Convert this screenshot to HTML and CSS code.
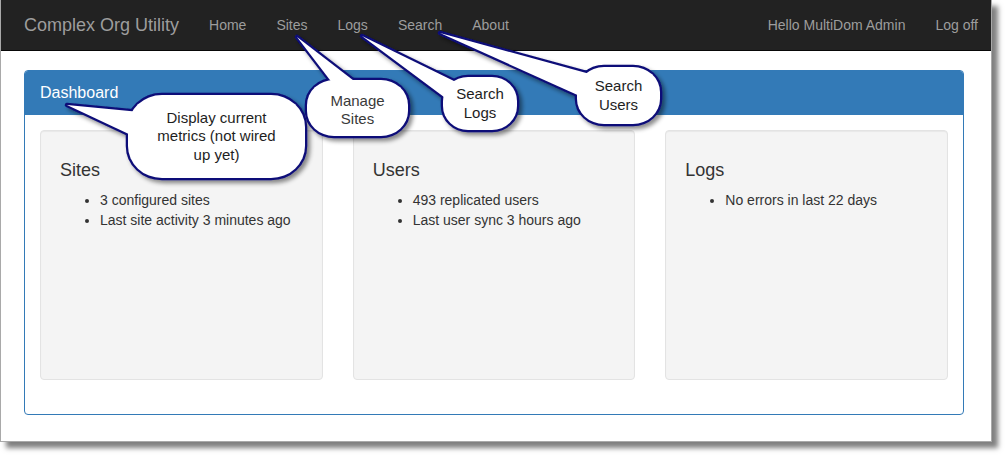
FILE: index.html
```html
<!DOCTYPE html>
<html lang="en">
<head>
<meta charset="utf-8">
<title>Complex Org Utility</title>
<link rel="stylesheet" href="styles.css">
</head>
<body>
<div class="frame">
  <nav class="navbar">
    <a class="brand" href="#">Complex Org Utility</a>
    <ul class="nav">
      <li><a href="#">Home</a></li>
      <li><a href="#">Sites</a></li>
      <li><a href="#">Logs</a></li>
      <li><a href="#">Search</a></li>
      <li><a href="#">About</a></li>
    </ul>
    <ul class="nav nav-right">
      <li><a href="#">Hello MultiDom Admin</a></li>
      <li><a href="#">Log off</a></li>
    </ul>
  </nav>
  <main class="content">
    <section class="panel">
      <div class="panel-heading">Dashboard</div>
      <div class="panel-body">
        <div class="well">
          <h4>Sites</h4>
          <ul>
            <li>3 configured sites</li>
            <li>Last site activity 3 minutes ago</li>
          </ul>
        </div>
        <div class="well">
          <h4>Users</h4>
          <ul>
            <li>493 replicated users</li>
            <li>Last user sync 3 hours ago</li>
          </ul>
        </div>
        <div class="well">
          <h4>Logs</h4>
          <ul>
            <li>No errors in last 22 days</li>
          </ul>
        </div>
      </div>
    </section>
  </main>
</div>

<svg class="callouts" width="1006" height="457" viewBox="0 0 1006 457">
  <defs>
    <filter id="sh" x="-20%" y="-20%" width="140%" height="140%">
      <feDropShadow dx="3" dy="3" stdDeviation="2" flood-color="#000" flood-opacity="0.45"/>
    </filter>
  </defs>
  <g filter="url(#sh)">
    <g class="outline">
      <rect x="128" y="95" width="177" height="83" rx="34" ry="32"/>
      <polygon points="67,105 140,112 133,136"/>
    </g>
    <g class="fill">
      <rect x="128" y="95" width="177" height="83" rx="34" ry="32"/>
      <polygon points="67,105 140,112 133,136"/>
    </g>
  </g>
  <g filter="url(#sh)">
    <g class="outline">
      <rect x="307" y="80" width="101" height="56" rx="27" ry="25"/>
      <polygon points="297,37 333,84 358,84"/>
    </g>
    <g class="fill">
      <rect x="307" y="80" width="101" height="56" rx="27" ry="25"/>
      <polygon points="297,37 333,84 358,84"/>
    </g>
  </g>
  <g filter="url(#sh)">
    <g class="outline">
      <rect x="443" y="77" width="74" height="53" rx="25" ry="24"/>
      <polygon points="362,36 456,82 448,100"/>
    </g>
    <g class="fill">
      <rect x="443" y="77" width="74" height="53" rx="25" ry="24"/>
      <polygon points="362,36 456,82 448,100"/>
    </g>
  </g>
  <g filter="url(#sh)">
    <g class="outline">
      <rect x="577" y="67" width="83" height="57" rx="27" ry="25"/>
      <polygon points="440,33 590,74 582,97"/>
    </g>
    <g class="fill">
      <rect x="577" y="67" width="83" height="57" rx="27" ry="25"/>
      <polygon points="440,33 590,74 582,97"/>
    </g>
  </g>
</svg>

<div class="callout-text c1">Display current<br>metrics (not wired<br>up yet)</div>
<div class="callout-text c2">Manage<br>Sites</div>
<div class="callout-text c3">Search<br>Logs</div>
<div class="callout-text c4">Search<br>Users</div>
</body>
</html>
```

FILE: styles.css
```css
html, body {
  margin: 0;
  padding: 0;
  background: #ffffff;
}

body {
  position: relative;
  width: 1006px;
  height: 457px;
  font-family: "Liberation Sans", Arial, sans-serif;
  font-size: 14px;
  line-height: 20px;
  color: #333333;
  overflow: hidden;
}

.frame {
  width: 990px;
  height: 441px;
  border-left: 1px solid #a9a9a9;
  border-right: 1px solid #a9a9a9;
  border-bottom: 1px solid #a9a9a9;
  background: #ffffff;
  box-shadow: 6px 6px 5px rgba(0, 0, 0, 0.5);
  overflow: hidden;
}

/* Navbar */
.navbar {
  display: flex;
  align-items: center;
  height: 50px;
  background: #222222;
  border-bottom: 1px solid #080808;
  padding-left: 8px;
}

.brand {
  padding: 15px;
  font-size: 18px;
  line-height: 20px;
  color: #9d9d9d;
  text-decoration: none;
}

.nav {
  display: flex;
  margin: 0;
  padding: 0;
  list-style: none;
}

.nav a {
  display: block;
  padding: 15px;
  line-height: 20px;
  color: #9d9d9d;
  text-decoration: none;
}

.nav-right {
  margin-left: auto;
}

.nav-right li:last-child a {
  padding-right: 13px;
}

/* Content */
.content {
  padding: 19px 0 0 23px;
}

.panel {
  width: 940px;
  box-sizing: border-box;
  border: 1px solid #337ab7;
  border-radius: 4px;
  background: #ffffff;
}

.panel-heading {
  display: flex;
  align-items: center;
  height: 44px;
  padding: 0 15px;
  background: #337ab7;
  color: #ffffff;
  font-size: 16px;
  border-radius: 3px 3px 0 0;
}

.panel-body {
  display: grid;
  grid-template-columns: repeat(3, 1fr);
  column-gap: 30px;
  padding: 15px;
}

.well {
  height: 250px;
  box-sizing: border-box;
  margin-bottom: 19px;
  padding: 19px;
  background: #f4f4f4;
  border: 1px solid #e3e3e3;
  border-radius: 4px;
  box-shadow: inset 0 1px 1px rgba(0, 0, 0, 0.05);
}

.well h4 {
  margin: 10px 0 10px;
  font-size: 18px;
  font-weight: 500;
  line-height: 20px;
  color: #333333;
}

.well ul {
  margin: 0;
  padding-left: 40px;
}

.well li {
  line-height: 20px;
}

/* Callouts */
.callouts {
  position: absolute;
  left: 0;
  top: 0;
  pointer-events: none;
}

.callouts .outline rect,
.callouts .outline polygon {
  fill: none;
  stroke: #0d0d78;
  stroke-width: 4.5;
  stroke-linejoin: round;
}

.callouts .fill rect,
.callouts .fill polygon {
  fill: #ffffff;
  stroke: none;
}

.callout-text {
  position: absolute;
  display: flex;
  align-items: center;
  justify-content: center;
  text-align: center;
  font-size: 15px;
  line-height: 18.5px;
  color: #1e1e1e;
}

.c1 { left: 128px; top: 95px;  width: 177px; height: 83px; }
.c2 { left: 307px; top: 82px;  width: 101px; height: 56px; color: #3a3a3a; }
.c3 { left: 443px; top: 77px;  width: 74px;  height: 53px; }
.c4 { left: 577px; top: 67px;  width: 83px;  height: 57px; }
```
